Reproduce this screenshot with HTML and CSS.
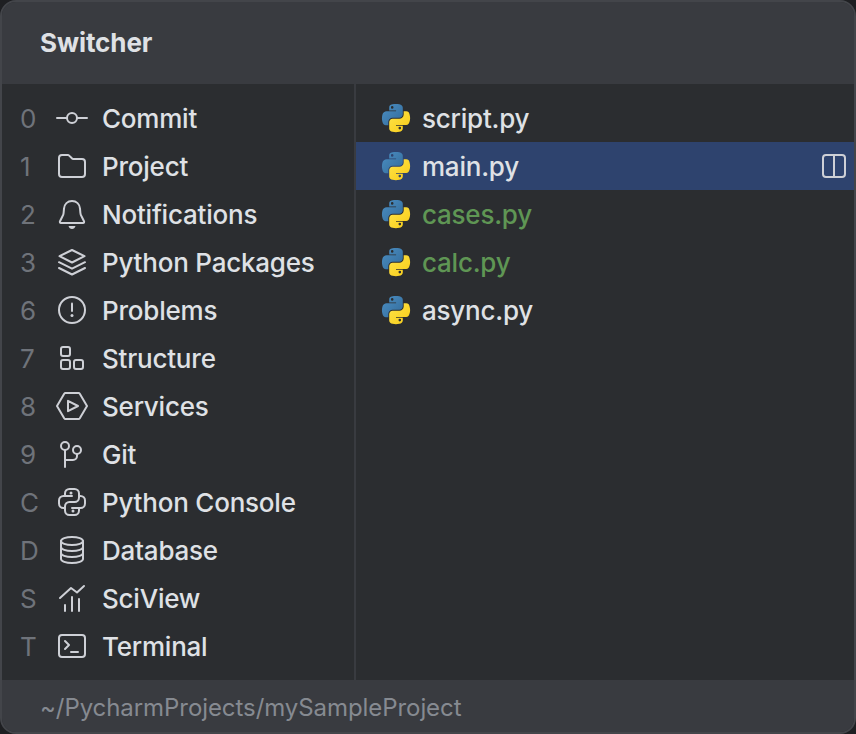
FILE: index.html
```
<!DOCTYPE html>
<html lang="en">
<head>
<meta charset="utf-8">
<title>Switcher</title>
<link rel="stylesheet" href="styles.css">
</head>
<body>
<svg class="defs" width="0" height="0" aria-hidden="true">
  <defs>
    <linearGradient id="blue" x1="0" y1="0" x2="1" y2="1"><stop offset="0" stop-color="#4b8fc4"/><stop offset="1" stop-color="#336a98"/></linearGradient>
    <linearGradient id="gold" x1="0" y1="0" x2="1" y2="1"><stop offset="0" stop-color="#ffe34a"/><stop offset="1" stop-color="#f7cc16"/></linearGradient>
    <symbol id="python" viewBox="0 0 32 32">
      <path fill="url(#blue)" d="M15.9 2c-1.200 0-2.300.1-3.300.3C9.700 2.800 9.200 3.900 9.200 5.800v2.600h6.900v.9H6.700c-2 0-3.800 1.200-4.300 3.500-.6 2.600-.6 4.300 0 7 .5 2 1.600 3.500 3.600 3.500h2.300v-3.200c0-2.300 2-4.300 4.300-4.300h6.800c1.900 0 3.400-1.600 3.400-3.500V5.800c0-1.800-1.500-3.200-3.400-3.500-1.100-.2-2.400-.3-3.500-.3zm-3.700 2.100a1.300 1.300 0 1 1 0 2.600 1.300 1.300 0 0 1 0-2.600z"/>
      <path fill="url(#gold)" d="M23.700 9.300v3.100c0 2.400-2 4.400-4.300 4.400h-6.800c-1.900 0-3.400 1.600-3.400 3.500v6.100c0 1.800 1.600 2.900 3.400 3.400 2.100.6 4.200.7 6.800 0 1.700-.5 3.400-1.500 3.400-3.400v-2.600H16v-.9h10.200c2 0 2.700-1.400 3.400-3.500.7-2.100.7-4.200 0-7-.5-2-1.400-3.100-3.400-3.100zm-3.900 15.500a1.300 1.300 0 1 1 0 2.600 1.300 1.300 0 0 1 0-2.600z"/>
    </symbol>
  </defs>
</svg>
<main class="popup">
  <header class="title">Switcher</header>
  <div class="content">
    <ul class="tools">
      <li><span class="key">0</span><svg viewBox="0 0 32 32"><circle cx="16" cy="16" r="5"/><path d="M1 16h10M21 16h10"/></svg><span>Commit</span></li>
      <li><span class="key">1</span><svg viewBox="0 0 32 32"><path d="M3 8a3 3 0 0 1 3-3h5.800a2 2 0 0 1 1.400.6l2.700 2.700a2 2 0 0 0 1.400.7H26a3 3 0 0 1 3 3v12a3 3 0 0 1-3 3H6a3 3 0 0 1-3-3z"/></svg><span>Project</span></li>
      <li><span class="key">2</span><svg viewBox="0 0 32 32"><path d="M16 3c-4.500 0-7.600 3.300-8 7.600l-.4 4.400c-.1 1.200-.5 2.300-1.100 3.300L4 23.200c-.4.900 0 1.800 1 1.800h22c1 0 1.400-.9 1-1.800l-2.500-4.900c-.6-1-1-2.100-1.100-3.300l-.4-4.400C23.600 6.300 20.500 3 16 3z"/><path class="solid" d="M12.500 28h7c-.5 1.800-1.800 3-3.500 3s-3-1.200-3.500-3z"/></svg><span>Notifications</span></li>
      <li><span class="key">3</span><svg viewBox="0 0 32 32"><path d="M16 4L28.500 10.200 16 16.500 3.500 10.200zM3 16.200l13 6.500 13-6.500M3 22l13 6.500L29 22"/></svg><span>Python Packages</span></li>
      <li><span class="key">6</span><svg viewBox="0 0 32 32"><circle cx="16" cy="16" r="13"/><path d="M16 9.500v7.500"/><circle class="solid" cx="16" cy="21.500" r="1.500"/></svg><span>Problems</span></li>
      <li><span class="key">7</span><svg viewBox="0 0 32 32"><rect x="5" y="5" width="9" height="9" rx="2"/><rect x="5" y="18" width="9" height="9" rx="2"/><rect x="18" y="18" width="9" height="9" rx="2"/></svg><span>Structure</span></li>
      <li><span class="key">8</span><svg viewBox="0 0 32 32"><path d="M9.500 3h13a1.500 1.500 0 0 1 1.300.7L31 16l-7.200 12.300a1.500 1.500 0 0 1-1.300.7h-13a1.500 1.500 0 0 1-1.300-.7L1 16 8.200 3.700A1.500 1.500 0 0 1 9.500 3zM12 10.800v10.400L22 16z"/></svg><span>Services</span></li>
      <li><span class="key">9</span><svg viewBox="0 0 32 32"><circle cx="9" cy="8" r="4"/><circle cx="21" cy="12" r="4"/><path d="M9 12v17M21 16v2a4 4 0 0 1-4 4H9"/></svg><span>Git</span></li>
      <li><span class="key">C</span><svg viewBox="0 0 32 32"><path d="M9 22H7.500C5 22 3 20 3 17.500v-3C3 12 5 10 7.500 10H16M9 10V7.500C9 5 11 3 13.500 3h5C21 3 23 5 23 7.500v4c0 2.500-2 4.500-4.500 4.500h-5C11 16 9 18 9 20.500v4C9 27 11 29 13.500 29h5c2.500 0 4.500-2 4.500-4.500V22M16 22h8.500c2.500 0 4.500-2 4.500-4.500v-3c0-2.500-2-4.500-4.500-4.500H23"/><circle class="solid" cx="15" cy="7" r="1.500"/><circle class="solid" cx="17" cy="25" r="1.500"/></svg><span>Python Console</span></li>
      <li><span class="key">D</span><svg viewBox="0 0 32 32"><ellipse cx="16" cy="7" rx="11" ry="4"/><path d="M5 7v18c0 2.200 4.900 4 11 4s11-1.800 11-4V7M5 13c0 2.200 4.900 4 11 4s11-1.800 11-4M5 19c0 2.200 4.900 4 11 4s11-1.800 11-4"/></svg><span>Database</span></li>
      <li><span class="key">S</span><svg viewBox="0 0 32 32"><path d="M4 16L15 6l6 4.500 7-6.500M9 23v6M16 15v14M23 17v12"/></svg><span>SciView</span></li>
      <li><span class="key">T</span><svg viewBox="0 0 32 32"><rect x="3" y="5" width="26" height="22" rx="3"/><path d="M9 11l4 4-4 4M15 22h7"/></svg><span>Terminal</span></li>
    </ul>
    <ul class="files">
      <li><svg><use href="#python"/></svg><span>script.py</span></li>
      <li class="selected"><svg><use href="#python"/></svg><span>main.py</span><svg class="split" viewBox="0 0 32 32"><rect x="5" y="5" width="22" height="22" rx="3"/><path d="M16 5v22"/></svg></li>
      <li class="added"><svg><use href="#python"/></svg><span>cases.py</span></li>
      <li class="added"><svg><use href="#python"/></svg><span>calc.py</span></li>
      <li><svg><use href="#python"/></svg><span>async.py</span></li>
    </ul>
  </div>
  <footer class="path">~/PycharmProjects/mySampleProject</footer>
</main>
</body>
</html>
```
FILE: styles.css
```
* { box-sizing: border-box; }
body {
  margin: 0;
  background: #1e1f22;
  font: 26px/48px Inter, "Liberation Sans", sans-serif;
  font-weight: 450;
  letter-spacing: -0.22px;
  color: #dfe1e5;
}
.defs { display: block; height: 0; }
.popup {
  width: 856px;
  height: 734px;
  display: flex;
  flex-direction: column;
  border: 2px solid #43454a;
  border-radius: 16px;
  background: #2b2d30;
  overflow: hidden;
}
.title {
  height: 82px;
  padding-left: 38px;
  background: #393b40;
  font-weight: 650;
  letter-spacing: -0.08px;
  line-height: 82px;
}
.content { flex: 1; display: flex; }
ul { list-style: none; margin: 0; padding: 10px 0 0; }
li { height: 48px; display: flex; align-items: center; white-space: nowrap; }
li span { padding-top: 2px; line-height: 46px; }
li svg {
  width: 32px;
  height: 32px;
  flex: none;
  margin-right: 14px;
  fill: none;
  stroke: #ced0d6;
  stroke-width: 2;
  stroke-linecap: round;
  stroke-linejoin: round;
}
li svg .solid { fill: #ced0d6; stroke: none; }
.tools { width: 354px; border-right: 2px solid #393b40; }
.tools li { padding-left: 18px; }
.key { width: 36px; color: #6f737a; font-weight: 400; }
.files { flex: 1; }
.files li { padding-left: 24px; }
.files svg { margin-right: 10px; }
.files use { stroke: none; }
.selected { background: #2e436e; }
.files .split { margin: 0 4px 0 auto; }
.added span { color: #5f9654; }
.path {
  height: 52px;
  padding-left: 38px;
  background: #393b40;
  color: #868a91;
  font-size: 24px;
  font-weight: 400;
  letter-spacing: -0.07px;
  line-height: 56px;
}
```
